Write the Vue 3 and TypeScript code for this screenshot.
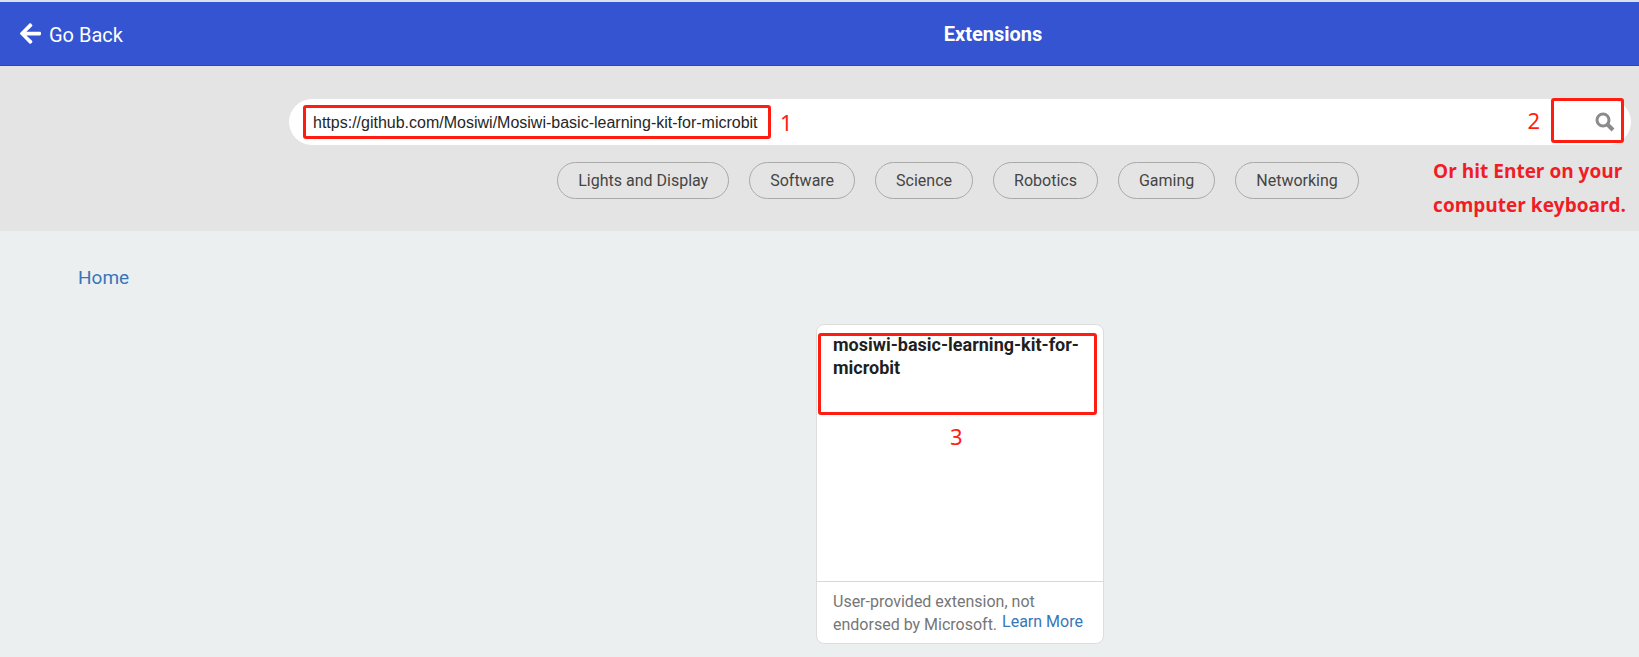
<script setup lang="ts">
import { ref } from 'vue'

const query = ref('https://github.com/Mosiwi/Mosiwi-basic-learning-kit-for-microbit')
const tags: string[] = ['Lights and Display', 'Software', 'Science', 'Robotics', 'Gaming', 'Networking']
</script>

<template>
  <div class="page">
    <header class="bar">
      <div class="side">
        <button class="back" type="button">
          <svg class="arrow" viewBox="0 0 448 448" aria-hidden="true">
            <path
              fill="#fff"
              d="M257.5 413.500l-22.200 22.200c-9.400 9.400-24.600 9.400-33.900 0L7 241.400c-9.400-9.400-9.400-24.600 0-33.900L201.400 13.100c9.400-9.400 24.600-9.400 33.900 0l22.200 22.200c9.500 9.500 9.300 25-.4 34.300L136.600 184.400H424c13.300 0 24 10.700 24 24v32c0 13.300-10.700 24-24 24H136.600l120.500 114.800c9.800 9.300 10 24.800.4 34.300z"
            />
          </svg>
          <span class="back-label">Go Back</span>
        </button>
      </div>
      <h1 class="title">Extensions</h1>
    </header>

    <section class="finder">
      <form class="search" role="search" @submit.prevent>
        <input v-model="query" class="field" type="text" aria-label="Search or enter project URL" />
        <button class="go" type="submit" aria-label="Search">
          <svg class="lens" viewBox="0 0 20 20" aria-hidden="true">
            <circle cx="8" cy="8" r="6" fill="none" stroke="#8b8b8b" stroke-width="3" />
            <path d="M12.500 12.500 L18 18" stroke="#8b8b8b" stroke-width="4" />
          </svg>
        </button>
        <span class="frame frame-url"></span>
        <span class="num num-one">1</span>
        <span class="num num-two">2</span>
        <span class="frame frame-go"></span>
      </form>
      <div class="tags">
        <button v-for="tag in tags" :key="tag" class="tag" type="button">{{ tag }}</button>
      </div>
      <p class="hint">Or hit Enter on your<br />computer keyboard.</p>
    </section>

    <main class="content">
      <a class="home" href="#">Home</a>
      <div class="cards">
        <article class="card">
          <div class="card-body">
            <h2 class="card-title">mosiwi-basic-learning-kit-for-microbit</h2>
            <span class="frame frame-card"></span>
            <span class="num num-three">3</span>
          </div>
          <footer class="card-foot">
            User-provided extension, not endorsed by Microsoft.
            <a class="learn" href="#">Learn More</a>
          </footer>
        </article>
      </div>
    </main>
  </div>
</template>

<style>
body {
  background: #ebeff0;
}
</style>

<style scoped>
.page {
  box-sizing: border-box;
  min-height: 100vh;
  border-top: 2px solid #dcdfee;
  background: #ebeff0;
  font-family: Roboto, "Liberation Sans", sans-serif;
  font-size: 16px;
  color: #1f1f1f;
}
button {
  font-family: inherit;
  cursor: pointer;
}
.bar {
  display: flex;
  align-items: center;
  box-sizing: border-box;
  height: 64px;
  background: #3454d1;
  border-bottom: 1px solid #2e48b0;
  color: #fff;
}
.side {
  flex: 0 0 347px;
}
.back {
  display: flex;
  align-items: center;
  gap: 8px;
  margin-left: 20px;
  padding: 0;
  border: 0;
  background: none;
  color: #fff;
  font-size: 20px;
  line-height: 24px;
}
.arrow {
  width: 21px;
  height: 21px;
}
.back-label {
  padding-top: 2px;
}
.title {
  flex: 1;
  margin: 0;
  text-align: center;
  font-size: 20px;
  line-height: 24px;
  font-weight: 700;
}
.finder {
  position: relative;
  box-sizing: border-box;
  height: 165px;
  padding: 33px 8px 0 289px;
  background: #e4e4e4;
}
.search {
  position: relative;
  display: flex;
  box-sizing: border-box;
  height: 46px;
  border-radius: 23px;
  background: #fff;
}
.field {
  flex: 1;
  min-width: 0;
  padding: 2px 0 0 24px;
  border: 0;
  outline: none;
  background: none;
  color: #262626;
  font-family: "Liberation Sans", Arial, sans-serif;
  font-size: 16px;
}
.go {
  display: flex;
  align-items: center;
  justify-content: flex-end;
  width: 80px;
  padding: 0 16px 0 0;
  border: 0;
  background: none;
}
.lens {
  width: 20px;
  height: 20px;
}
.tags {
  display: flex;
  justify-content: center;
  gap: 20px;
  margin-top: 17px;
  padding-right: 4px;
}
.tag {
  box-sizing: border-box;
  height: 37px;
  padding: 0 20px;
  border: 1px solid #a9a9a9;
  border-radius: 19px;
  background: none;
  color: #454545;
  font-size: 16px;
  line-height: 20px;
  white-space: nowrap;
}
.frame {
  position: absolute;
  box-sizing: border-box;
  border: 3px solid #ff1d12;
  border-radius: 3px;
  pointer-events: none;
}
.frame-url {
  left: 14px;
  top: 6px;
  width: 468px;
  height: 34px;
}
.frame-go {
  right: 7px;
  top: -1px;
  width: 73px;
  height: 45px;
}
.frame-card {
  left: 1px;
  right: 6px;
  top: 8px;
  height: 82px;
}
.num {
  position: absolute;
  color: #ff1d12;
  font-family: "Noto Sans", "Open Sans", sans-serif;
  font-size: 22px;
  line-height: 30px;
}
.num-one {
  left: 491px;
  top: 8px;
}
.num-two {
  right: 91px;
  top: 6px;
}
.num-three {
  left: 133px;
  top: 96px;
}
.hint {
  position: absolute;
  right: 13px;
  top: 88px;
  margin: 0;
  color: #f01d24;
  font-family: "Open Sans", "Noto Sans", sans-serif;
  font-size: 19px;
  font-weight: 700;
  line-height: 34px;
  white-space: nowrap;
}
.content {
  padding: 34px 0 12px;
}
.home {
  display: block;
  width: max-content;
  margin-left: 78px;
  font-size: 19px;
  line-height: 26px;
}
.home,
.learn {
  color: #3876b8;
  text-decoration: none;
}
.cards {
  display: flex;
  justify-content: center;
  margin-top: 33px;
  padding-left: 281px;
}
.card {
  box-sizing: border-box;
  display: flex;
  flex-direction: column;
  width: 288px;
  height: 320px;
  border: 1px solid #dcdddd;
  border-radius: 8px;
  background: #fff;
}
.card-body {
  position: relative;
  flex: 1;
  padding: 8px 16px 0;
}
.card-title {
  margin: 0;
  font-size: 18px;
  line-height: 23px;
  font-weight: 700;
}
.card-foot {
  box-sizing: border-box;
  height: 62px;
  padding: 8px 16px;
  border-top: 1px solid #d8d8d8;
  color: #767676;
  line-height: 23px;
}
.learn {
  margin-left: 1px;
  line-height: 16px;
  vertical-align: 3px;
  white-space: nowrap;
}
</style>
